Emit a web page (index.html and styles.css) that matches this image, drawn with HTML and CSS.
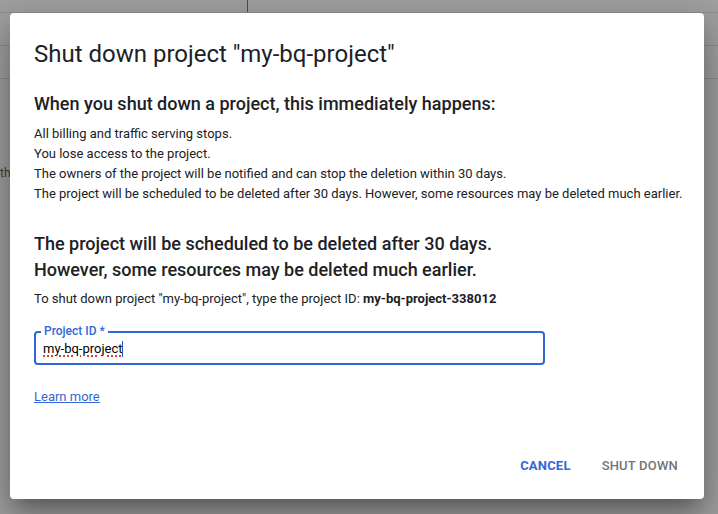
FILE: index.html
```html
<!DOCTYPE html>
<html lang="en">
<head>
<meta charset="utf-8">
<title>Shut down project</title>
<link rel="stylesheet" href="styles.css">
</head>
<body>
<div class="page">
  <div class="topbar"><div class="topbar-cell"></div><div class="topbar-rest"></div></div>
  <div class="row"></div>
  <div class="row"></div>
  <div class="row-text">th</div>
</div>

<div class="dialog" role="dialog" aria-labelledby="dlg-title">
  <h1 class="dialog-title" id="dlg-title">Shut down project "my-bq-project"</h1>
  <h2 class="sub-heading">When you shut down a project, this immediately happens:</h2>
  <ul class="effects">
    <li>All billing and traffic serving stops.</li>
    <li>You lose access to the project.</li>
    <li>The owners of the project will be notified and can stop the deletion within 30 days.</li>
    <li>The project will be scheduled to be deleted after 30 days. However, some resources may be deleted much earlier.</li>
  </ul>
  <h2 class="warning-heading">The project will be scheduled to be deleted after 30 days.<br>However, some resources may be deleted much earlier.</h2>
  <p class="confirm-text">To shut down project "my-bq-project", type the project ID: <b>my-bq-project-338012</b></p>
  <div class="field">
    <span class="field-label">Project ID *</span>
    <span class="field-value"><span class="misspelled">my-bq-project</span><span class="caret"></span></span>
  </div>
  <a class="learn-more" href="#">Learn more</a>
  <div class="actions">
    <button class="btn btn-primary" type="button">Cancel</button>
    <button class="btn btn-disabled" type="button">Shut down</button>
  </div>
</div>
</body>
</html>
```

FILE: styles.css
```css
* { box-sizing: border-box; }

html, body {
  margin: 0;
  padding: 0;
}

body {
  width: 718px;
  height: 514px;
  overflow: hidden;
  position: relative;
  background: #a1a1a1;
  font-family: Roboto, "Liberation Sans", Arial, sans-serif;
  color: #202124;
}

/* dimmed page behind the dialog */
.page {
  width: 718px;
  height: 514px;
}

.topbar {
  display: flex;
  height: 13px;
  border-bottom: 1px solid #8e8e8e;
}

.topbar-cell {
  width: 248px;
  border-right: 1px solid #4e4e4e;
}

.topbar-rest { flex: 1; }

.row {
  height: 33px;
  border-bottom: 1px solid #8e8e8e;
}

.row-text {
  margin-top: 86px;
  font-size: 12px;
  line-height: 16px;
  color: #3c3c3c;
}

/* dialog */
.dialog {
  position: absolute;
  left: 10px;
  top: 13px;
  width: 694px;
  height: 486px;
  background: #fff;
  border-radius: 4px;
  box-shadow: 0 11px 15px -7px rgba(0,0,0,.28), 0 24px 38px 3px rgba(0,0,0,.18), 0 9px 46px 8px rgba(0,0,0,.14);
  padding: 25px 18px 16px 24px;
  display: flex;
  flex-direction: column;
}

.dialog-title {
  margin: 0;
  font-size: 24px;
  line-height: 32px;
  font-weight: 400;
  color: #202124;
}

.sub-heading {
  margin: 22px 0 0;
  font-size: 18px;
  line-height: 24px;
  font-weight: 500;
  color: #202124;
}

.effects {
  list-style: none;
  margin: 8px 0 0;
  padding: 0;
  font-size: 13px;
  line-height: 20px;
  color: #202124;
}

.warning-heading {
  margin: 27px 0 0;
  font-size: 18px;
  line-height: 26px;
  font-weight: 500;
  color: #202124;
}

.confirm-text {
  margin: 6px 0 0;
  font-size: 13px;
  line-height: 20px;
}

.confirm-text b { font-weight: 700; }

.field {
  position: relative;
  margin-top: 22px;
  width: 511px;
  height: 34px;
  padding: 0 7px;
  border: 2px solid #3367d6;
  border-radius: 4px;
  display: flex;
  align-items: center;
}

.field-label {
  position: absolute;
  left: 5px;
  top: -8px;
  padding: 0 3px;
  background: #fff;
  font-size: 12px;
  line-height: 12px;
  font-weight: 500;
  color: #3367d6;
}

.field-value {
  display: flex;
  align-items: center;
  font-size: 13px;
  line-height: 18px;
  margin-top: 2px;
  color: #000;
}

.misspelled {
  text-decoration: underline dotted #e0403a;
  text-decoration-thickness: 2px;
  text-underline-offset: 2px;
}

.caret {
  width: 1px;
  height: 16px;
  background: #1a57c4;
}

.learn-more {
  align-self: flex-start;
  margin-top: 22px;
  font-size: 13px;
  line-height: 20px;
  color: #3367d6;
  text-decoration: underline;
}

.actions {
  margin-top: auto;
  display: flex;
  justify-content: flex-end;
  gap: 15px;
}

.btn {
  height: 36px;
  padding: 0 8px;
  border: 0;
  background: transparent;
  font-family: Roboto, "Liberation Sans", Arial, sans-serif;
  font-size: 13px;
  font-weight: 500;
  text-transform: uppercase;
  letter-spacing: 0.2px;
  cursor: pointer;
}

.btn-primary { color: #3367d6; font-weight: 700; }
.btn-disabled { color: #757575; }
```
